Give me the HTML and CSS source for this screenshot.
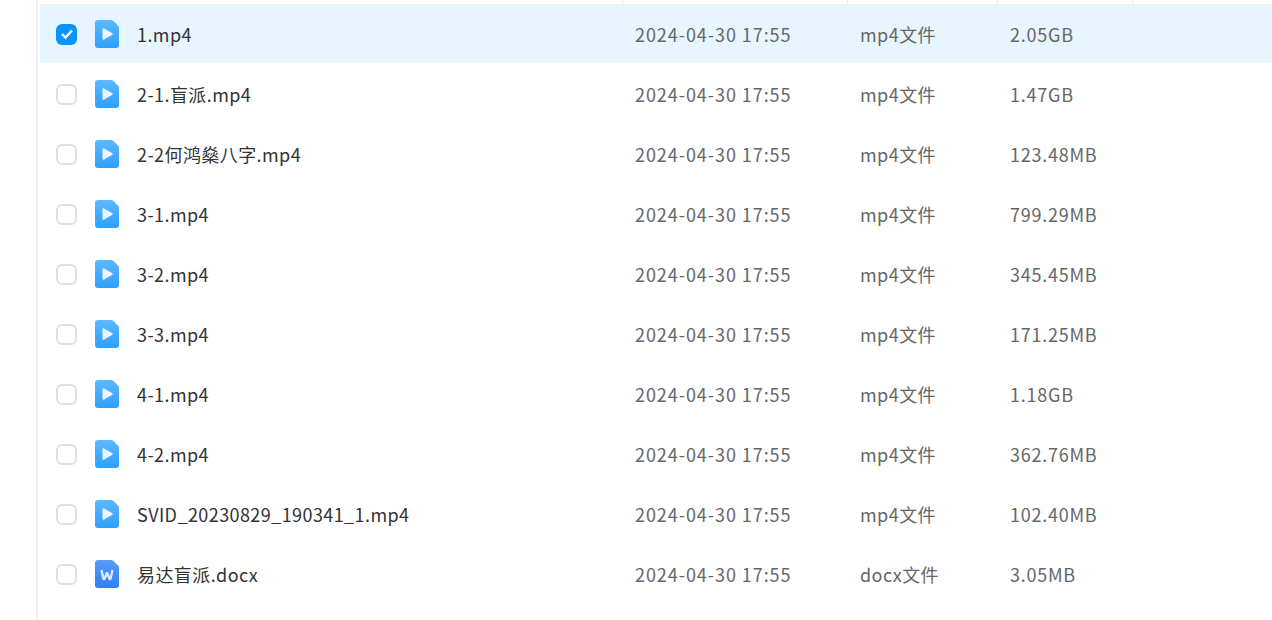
FILE: index.html
```html
<!DOCTYPE html>
<html lang="zh-CN">
<head>
    <meta charset="UTF-8">
    <title>文件列表</title>
    <link rel="stylesheet" href="styles.css">
</head>
<body>
    <svg class="defs" width="0" height="0" aria-hidden="true">
        <defs>
            <linearGradient id="videoFill" x1="0" y1="0" x2="0" y2="1">
                <stop offset="0" stop-color="#5cb8ff"/>
                <stop offset="1" stop-color="#2fa0ff"/>
            </linearGradient>
            <linearGradient id="wordFill" x1="0" y1="0" x2="0" y2="1">
                <stop offset="0" stop-color="#5a9bf6"/>
                <stop offset="1" stop-color="#2e7ff8"/>
            </linearGradient>
            <symbol id="iconVideo" viewBox="0 0 24 28">
                <path d="M3 0H16.500a2 2 0 0 1 1.400.6L23.400 6.100a2 2 0 0 1 .6 1.400V25a3 3 0 0 1-3 3H3a3 3 0 0 1-3-3V3a3 3 0 0 1 3-3z" fill="url(#videoFill)"/>
                <path d="M7.500 9v10a.8.800 0 0 0 1.200.7l8.600-5a.8.800 0 0 0 0-1.400l-8.600-5A.8.800 0 0 0 7.500 9z" fill="#e8f5ff"/>
            </symbol>
            <symbol id="iconWord" viewBox="0 0 24 28">
                <path d="M3 0H16.500a2 2 0 0 1 1.400.6L23.400 6.100a2 2 0 0 1 .6 1.400V25a3 3 0 0 1-3 3H3a3 3 0 0 1-3-3V3a3 3 0 0 1 3-3z" fill="url(#wordFill)"/>
                <path d="M6.500 10L8.500 19H9.500L12 12.500 14.500 19H15.500L17.500 10" fill="none" stroke="#dfeaff" stroke-width="2.300" stroke-linejoin="bevel"/>
            </symbol>
        </defs>
    </svg>

    <div class="page">
        <aside class="side"></aside>
        <main class="main">
            <!-- header, only the bottom of it is in view -->
            <div class="head">
                <span class="head-cell"></span>
                <span class="head-cell"></span>
                <span class="head-cell"></span>
                <span class="head-cell"></span>
                <span class="head-cell"></span>
            </div>

            <div class="row selected">
                <div class="name-cell">
                    <span class="check on">
                        <svg width="14" height="12" viewBox="0 0 14 12"><path d="M2 6l3.500 3.500L12 2.500" fill="none" stroke="#fff" stroke-width="2.400"/></svg>
                    </span>
                    <svg class="file-icon"><use href="#iconVideo"/></svg>
                    <span class="file-name">1.mp4</span>
                </div>
                <div class="cell date">2024-04-30 17:55</div>
                <div class="cell type">mp4文件</div>
                <div class="cell size">2.05GB</div>
            </div>
            <div class="row">
                <div class="name-cell">
                    <span class="check"></span>
                    <svg class="file-icon"><use href="#iconVideo"/></svg>
                    <span class="file-name">2-1.盲派.mp4</span>
                </div>
                <div class="cell date">2024-04-30 17:55</div>
                <div class="cell type">mp4文件</div>
                <div class="cell size">1.47GB</div>
            </div>
            <div class="row">
                <div class="name-cell">
                    <span class="check"></span>
                    <svg class="file-icon"><use href="#iconVideo"/></svg>
                    <span class="file-name">2-2何鸿燊八字.mp4</span>
                </div>
                <div class="cell date">2024-04-30 17:55</div>
                <div class="cell type">mp4文件</div>
                <div class="cell size">123.48MB</div>
            </div>
            <div class="row">
                <div class="name-cell">
                    <span class="check"></span>
                    <svg class="file-icon"><use href="#iconVideo"/></svg>
                    <span class="file-name">3-1.mp4</span>
                </div>
                <div class="cell date">2024-04-30 17:55</div>
                <div class="cell type">mp4文件</div>
                <div class="cell size">799.29MB</div>
            </div>
            <div class="row">
                <div class="name-cell">
                    <span class="check"></span>
                    <svg class="file-icon"><use href="#iconVideo"/></svg>
                    <span class="file-name">3-2.mp4</span>
                </div>
                <div class="cell date">2024-04-30 17:55</div>
                <div class="cell type">mp4文件</div>
                <div class="cell size">345.45MB</div>
            </div>
            <div class="row">
                <div class="name-cell">
                    <span class="check"></span>
                    <svg class="file-icon"><use href="#iconVideo"/></svg>
                    <span class="file-name">3-3.mp4</span>
                </div>
                <div class="cell date">2024-04-30 17:55</div>
                <div class="cell type">mp4文件</div>
                <div class="cell size">171.25MB</div>
            </div>
            <div class="row">
                <div class="name-cell">
                    <span class="check"></span>
                    <svg class="file-icon"><use href="#iconVideo"/></svg>
                    <span class="file-name">4-1.mp4</span>
                </div>
                <div class="cell date">2024-04-30 17:55</div>
                <div class="cell type">mp4文件</div>
                <div class="cell size">1.18GB</div>
            </div>
            <div class="row">
                <div class="name-cell">
                    <span class="check"></span>
                    <svg class="file-icon"><use href="#iconVideo"/></svg>
                    <span class="file-name">4-2.mp4</span>
                </div>
                <div class="cell date">2024-04-30 17:55</div>
                <div class="cell type">mp4文件</div>
                <div class="cell size">362.76MB</div>
            </div>
            <div class="row">
                <div class="name-cell">
                    <span class="check"></span>
                    <svg class="file-icon"><use href="#iconVideo"/></svg>
                    <span class="file-name">SVID_20230829_190341_1.mp4</span>
                </div>
                <div class="cell date">2024-04-30 17:55</div>
                <div class="cell type">mp4文件</div>
                <div class="cell size">102.40MB</div>
            </div>
            <div class="row">
                <div class="name-cell">
                    <span class="check"></span>
                    <svg class="file-icon"><use href="#iconWord"/></svg>
                    <span class="file-name">易达盲派.docx</span>
                </div>
                <div class="cell date">2024-04-30 17:55</div>
                <div class="cell type">docx文件</div>
                <div class="cell size">3.05MB</div>
            </div>
        </main>
    </div>
</body>
</html>
```

FILE: styles.css
```css
/* Base */
body {
    margin: 0;
    background-color: #fff;
    color: #666;
    font-family: "Noto Sans CJK SC", "Noto Sans", sans-serif;
    font-size: 18px;
    overflow: hidden;
}

.defs {
    position: absolute;
}

.page {
    display: flex;
    height: 620px;
}

/* Left pane edge */
.side {
    width: 36px;
    flex-shrink: 0;
    border-right: 2px solid #f0f0f0;
}

.main {
    flex: 1;
    min-width: 0;
    padding-left: 2px;
}

/* Column header */
.head {
    display: grid;
    grid-template-columns: 582px 225px 150px 135px 1fr;
    height: 4px;
    border-bottom: 1px solid #f0f0f0;
}

.head-cell {
    border-right: 1px solid #ececec;
    margin-right: -1px;
}

.head-cell:last-child {
    border-right: 0;
}

/* Rows */
.row {
    display: grid;
    grid-template-columns: 582px 225px 150px 1fr;
    height: 60px;
    align-items: center;
}

.row.selected {
    height: 58px;
    margin-bottom: 1px;
    background-color: #e7f5ff;
}

.name-cell {
    display: flex;
    align-items: center;
    padding-left: 16px;
}

.cell {
    padding-left: 13px;
    white-space: nowrap;
}

.date {
    letter-spacing: 0.94px;
}

.type {
    letter-spacing: 0.45px;
}

.size {
    letter-spacing: 0.75px;
}

.file-name {
    color: #333;
    letter-spacing: 0.42px;
    white-space: nowrap;
}

.file-icon {
    width: 24px;
    height: 28px;
    margin: 0 18px;
    flex-shrink: 0;
}

/* Checkbox */
.check {
    display: flex;
    align-items: center;
    justify-content: center;
    box-sizing: border-box;
    width: 21px;
    height: 21px;
    border: 2px solid #e0e0e0;
    border-radius: 6px;
    background-color: #fff;
}

.check.on {
    border: 0;
    background-color: #0a94ff;
}
```
